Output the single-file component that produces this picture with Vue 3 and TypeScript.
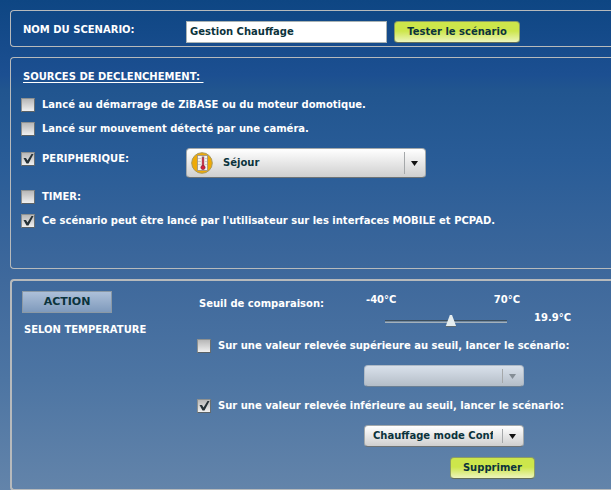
<script setup lang="ts">
import { computed, ref } from 'vue'

const scenarioName = ref('Gestion Chauffage')
const onStartup = ref(false)
const onMotion = ref(false)
const onDevice = ref(true)
const onTimer = ref(false)
const userLaunch = ref(true)
const device = ref('Séjour')

const minTemp = -40
const maxTemp = 70
const threshold = ref(19.9)
const thresholdText = computed(() => `${Number(threshold.value).toFixed(1)}°C`)
const above = ref(false)
const below = ref(true)
const aboveScenario = ref('')
const belowScenario = ref('Chauffage mode Confort')
</script>

<template>
  <main class="page">
    <section class="panel name-panel">
      <label class="name-label" for="scenario-name">NOM DU SCENARIO:</label>
      <input id="scenario-name" v-model="scenarioName" class="name-input" type="text" />
      <button class="lime test" type="button">Tester le scénario</button>
    </section>

    <section class="panel sources">
      <h2 class="title">SOURCES DE DECLENCHEMENT:&nbsp;</h2>
      <label class="check">
        <input v-model="onStartup" type="checkbox" />
        <span>Lancé au démarrage de ZiBASE ou du moteur domotique.</span>
      </label>
      <label class="check">
        <input v-model="onMotion" type="checkbox" />
        <span>Lancé sur mouvement détecté par une caméra.</span>
      </label>
      <div class="device-row">
        <label class="check">
          <input v-model="onDevice" type="checkbox" />
          <span>PERIPHERIQUE:</span>
        </label>
        <div class="combo large">
          <select v-model="device" aria-label="Périphérique">
            <option>Séjour</option>
          </select>
          <svg class="thermo" viewBox="0 0 22 22" aria-hidden="true">
            <circle cx="11" cy="11" r="10.3" fill="#eeaa08" stroke="#a9995c" />
            <rect x="6.500" y="3.500" width="10" height="15" fill="#f3f1ee" stroke="#9a8f80" stroke-width=".8" />
            <path d="M7 6.500h3M7 9.500h3M7 12.500h3M14 6.500h2M14 9.500h2M14 12.500h2" stroke="#c3c3c8" stroke-width=".8" />
            <path d="M12 4.500v11" stroke="#8e5a66" stroke-width="2.400" />
            <path d="M12 6v9" stroke="#d62b45" stroke-width="1.400" />
            <circle cx="12" cy="15.500" r="2.100" fill="#d81e3b" stroke="#84283a" stroke-width=".7" />
          </svg>
          <i class="divider"></i>
          <svg class="arrow" viewBox="0 0 7 5" aria-hidden="true"><path d="M0 0h7L3.500 5z" /></svg>
        </div>
      </div>
      <label class="check">
        <input v-model="onTimer" type="checkbox" />
        <span>TIMER:</span>
      </label>
      <label class="check">
        <input v-model="userLaunch" type="checkbox" />
        <span>Ce scénario peut être lancé par l'utilisateur sur les interfaces MOBILE et PCPAD.</span>
      </label>
    </section>

    <section class="panel action-panel">
      <div class="kind">
        <button class="action" type="button">ACTION</button>
        <p>SELON TEMPERATURE</p>
      </div>
      <div class="settings">
        <div class="threshold">
          <label class="threshold-label" for="threshold">Seuil de comparaison:</label>
          <div class="slider">
            <div class="bounds"><span>{{ minTemp }}°C</span><span>{{ maxTemp }}°C</span></div>
            <input id="threshold" v-model="threshold" type="range" :min="minTemp" :max="maxTemp" step="0.1" />
          </div>
          <output for="threshold">{{ thresholdText }}</output>
        </div>
        <label class="check">
          <input v-model="above" type="checkbox" />
          <span>Sur une valeur relevée supérieure au seuil, lancer le scénario:</span>
        </label>
        <div class="combo small">
          <select v-model="aboveScenario" :disabled="!above" aria-label="Scénario au-dessus du seuil">
            <option value=""></option>
          </select>
          <i class="divider"></i>
          <svg class="arrow" viewBox="0 0 7 5" aria-hidden="true"><path d="M0 0h7L3.500 5z" /></svg>
        </div>
        <label class="check">
          <input v-model="below" type="checkbox" />
          <span>Sur une valeur relevée inférieure au seuil, lancer le scénario:</span>
        </label>
        <div class="combo small">
          <select v-model="belowScenario" :disabled="!below" aria-label="Scénario au-dessous du seuil">
            <option>Chauffage mode Confort</option>
          </select>
          <i class="divider"></i>
          <svg class="arrow" viewBox="0 0 7 5" aria-hidden="true"><path d="M0 0h7L3.500 5z" /></svg>
        </div>
        <button class="lime delete" type="button">Supprimer</button>
      </div>
    </section>
  </main>
</template>

<style>
body {
  background: #6384aa;
  overflow: hidden;
}
</style>

<style scoped>
* {
  box-sizing: border-box;
}

.page {
  display: flex;
  flex-direction: column;
  gap: 10px;
  padding: 10px 0 0 10px;
  background: linear-gradient(#0e4683 0, #1c4f91 75px, #21558f 90px, #295c97 160px, #3f699c 280px, #4d75a3 380px, #6384aa 490px);
  color: #fff;
  font: bold 10px/14px "DejaVu Sans", Verdana, sans-serif;
  white-space: nowrap;
}

.panel {
  border: 1px solid #b7babc;
  border-right: 0;
  border-radius: 4px 0 0 4px;
}

button,
input,
select {
  margin: 0;
  font: inherit;
  color: #0b333c;
}

.name-panel {
  display: flex;
  align-items: flex-start;
  padding: 10px 12px 3px;
}

.name-label {
  width: 163px;
  padding-top: 2px;
}

.name-input {
  width: 201px;
  height: 22px;
  padding: 0 3px 2px;
  border: 1px solid #aab3b3;
  background: #fff;
}

.lime {
  height: 22px;
  padding: 0;
  border: 1px solid #8b9c65;
  border-bottom-color: #65705a;
  border-radius: 4px;
  background: linear-gradient(#cde64b 0%, #cde64b 45%, #edf5bd 100%);
}

.test {
  width: 126px;
  margin-left: 7px;
}

.sources {
  display: flex;
  flex-direction: column;
  align-items: flex-start;
  gap: 10px;
  padding: 12px 10px 40px;
}

.title {
  margin: 0 0 4px 2px;
  font-size: inherit;
  text-decoration: underline;
  text-underline-offset: 2px;
}

.check {
  display: flex;
  align-items: center;
  gap: 7px;
}

.check input {
  appearance: none;
  flex: none;
  width: 14px;
  height: 14px;
  border: 1px solid #8d9191;
  border-right-color: #696f72;
  border-bottom-color: #596166;
  background: linear-gradient(#b7b7b7, #f0f0f0);
}

.check input:checked {
  background:
    url("data:image/svg+xml,%3Csvg xmlns='http://www.w3.org/2000/svg' viewBox='0 0 12 12'%3E%3Cpath d='M1.500 5H4l1.500 2.500L9.500 1h2L6.500 10.500H4.500z' fill='%23263238'/%3E%3C/svg%3E") no-repeat,
    linear-gradient(#b7b7b7, #f0f0f0);
}

.device-row {
  display: grid;
  grid-template-columns: 165px 240px;
  align-items: start;
  margin-bottom: 2px;
}

.device-row .check {
  padding-top: 6px;
}

.combo {
  position: relative;
}

.combo select {
  display: block;
  appearance: none;
  width: 100%;
  height: 100%;
  border: 1px solid #a4a9ab;
  border-bottom-color: #6d7376;
  border-radius: 4px;
  background: linear-gradient(#fff, #cfcfcf);
  opacity: 1;
}

.combo select:disabled {
  border-color: #afbac6;
  border-bottom-color: #6b7f93;
  background: linear-gradient(#d9e1eb, #b4bdc7);
}

.large {
  height: 30px;
  margin-top: 2px;
}

.large select {
  padding: 0 32px 0 36px;
}

.small {
  width: 160px;
  height: 22px;
}

.small select {
  padding: 0 30px 0 8px;
}

.thermo {
  position: absolute;
  top: 4px;
  left: 5px;
  width: 22px;
  height: 22px;
  pointer-events: none;
}

.divider {
  position: absolute;
  top: 4px;
  right: 21px;
  bottom: 4px;
  width: 1px;
  background: #a5a8aa;
  pointer-events: none;
}

.arrow {
  position: absolute;
  top: 50%;
  right: 8px;
  width: 7px;
  height: 5px;
  margin-top: -2px;
  fill: #111;
  pointer-events: none;
}

select:disabled ~ .arrow {
  fill: #858e96;
}

.action-panel {
  display: grid;
  grid-template-columns: 175px 1fr;
  padding: 10px;
  border-width: 2px 0 2px 2px;
}

.action {
  display: block;
  width: 90px;
  height: 22px;
  padding: 0 0 1px;
  border: 1px solid #8b99a5;
  background: linear-gradient(#adc0d9, #7f9abc);
  font-size: 11px;
}

.kind p {
  margin: 10px 0 0 2px;
}

.settings {
  display: flex;
  flex-direction: column;
  align-items: flex-start;
}

.threshold {
  display: flex;
  align-items: flex-start;
  margin-bottom: 11px;
}

.threshold-label {
  width: 169px;
  padding: 6px 0 0 2px;
}

.slider {
  width: 154px;
}

.bounds {
  display: flex;
  justify-content: space-between;
  padding-top: 2px;
}

.slider input {
  display: block;
  appearance: none;
  width: 122px;
  height: 14px;
  margin: 7px 0 0 19px;
  background: linear-gradient(#3b4d5c 0 1px, #71889e 1px 2px, #a3b0bb 2px 3px) center / 100% 3px no-repeat;
}

.slider input::-webkit-slider-thumb {
  appearance: none;
  width: 11px;
  height: 12px;
  background: linear-gradient(#e4ecee 0 11px, #5d6a72 11px);
  clip-path: polygon(40% 0, 60% 0, 100% 100%, 0 100%);
}

.threshold output {
  padding: 20px 0 0 14px;
}

.settings .small {
  margin: 12px 0 10px 167px;
}

.settings .small + .check {
  margin-top: 2px;
}

.delete {
  width: 85px;
  margin-left: 253px;
}
</style>
